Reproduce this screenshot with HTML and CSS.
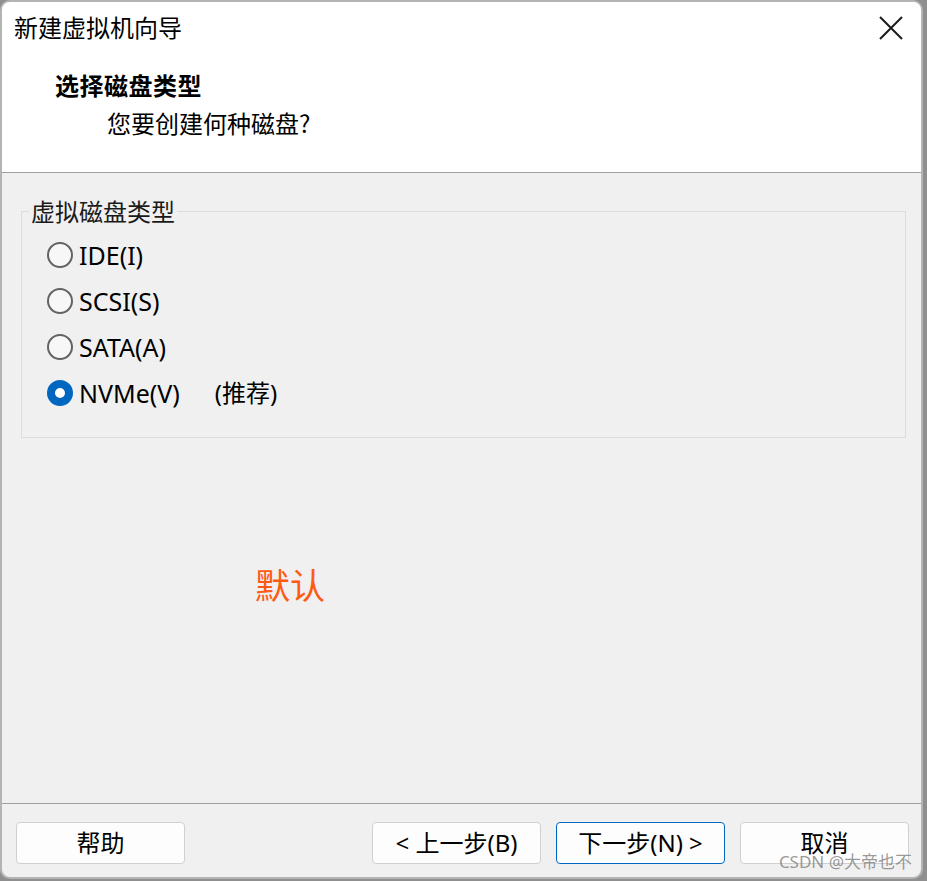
FILE: index.html
```html
<!DOCTYPE html>
<html lang="zh-CN">
<head>
<meta charset="utf-8">
<title>新建虚拟机向导</title>
<link rel="stylesheet" href="styles.css">
</head>
<body>
<div class="window">
  <div class="header">
    <div class="title-row">
      <span class="title">新建虚拟机向导</span>
      <svg class="close" width="24" height="24" viewBox="0 0 24 24"><path d="M1 1 L23 23 M23 1 L1 23" stroke="#1a1a1a" stroke-width="2" fill="none"/></svg>
    </div>
    <div class="heading">选择磁盘类型</div>
    <div class="subheading">您要创建何种磁盘?</div>
  </div>
  <div class="content">
    <fieldset class="group">
      <legend class="legend">虚拟磁盘类型</legend>
      <div class="options">
        <div class="radio-row"><span class="radio"></span><span class="label">IDE(I)</span></div>
        <div class="radio-row"><span class="radio"></span><span class="label">SCSI(S)</span></div>
        <div class="radio-row"><span class="radio"></span><span class="label">SATA(A)</span></div>
        <div class="radio-row"><span class="radio checked"></span><span class="label">NVMe(V)</span><span class="note">(推荐)</span></div>
      </div>
    </fieldset>
    <div class="default-note">默认</div>
  </div>
  <div class="footer">
    <button class="btn">帮助</button>
    <div class="spacer"></div>
    <button class="btn">&lt; 上一步(B)</button>
    <button class="btn primary">下一步(N) &gt;</button>
    <button class="btn">取消</button>
  </div>
  <div class="watermark">CSDN @大帝也不</div>
</div>
</body>
</html>
```

FILE: styles.css
```css
html, body {
  margin: 0;
  padding: 0;
}
body {
  background: #8f8f8f;
  width: 927px;
  height: 881px;
  overflow: hidden;
  font-family: "Noto Sans", "Noto Sans CJK SC", sans-serif;
  color: #000;
}
.window {
  position: relative;
  width: 923px;
  height: 879px;
  box-sizing: border-box;
  border: 2px solid #b4b4b4;
  border-radius: 10px;
  background: #f0f0f0;
  overflow: hidden;
  display: flex;
  flex-direction: column;
}
.header {
  background: #fff;
  height: 171px;
  box-sizing: border-box;
  border-bottom: 1px solid #a0a0a0;
  flex: none;
}
.title-row {
  display: flex;
  justify-content: space-between;
  align-items: center;
  padding: 9px 18px 0 12px;
  height: 32px;
}
.title {
  font-size: 24px;
  line-height: 32px;
  font-family: "Noto Sans CJK SC", sans-serif;
}
.close {
  display: block;
  margin-top: 1px;
}
.heading {
  margin: 26px 0 0 53px;
  font-size: 24px;
  line-height: 32px;
  font-weight: bold;
  letter-spacing: 0.5px;
  font-family: "Noto Sans CJK SC", sans-serif;
}
.subheading {
  margin: 6px 0 0 105px;
  font-size: 24px;
  line-height: 32px;
  font-family: "Noto Sans CJK SC", sans-serif;
}
.content {
  flex: 1;
  display: flex;
  flex-direction: column;
  align-items: flex-start;
}
.group {
  margin: 24px 0 0 19px;
  width: 885px;
  box-sizing: border-box;
  border: 1px solid #dcdcdc;
  padding: 7px 0 21px 7px;
  min-width: 0;
}
.legend {
  padding: 0 2px;
  margin: 0;
  font-size: 24px;
  line-height: 28px;
  font-family: "Noto Sans CJK SC", sans-serif;
  color: #1a1a1a;
}
.options {
  margin-left: 18px;
}
.radio-row {
  display: flex;
  align-items: center;
  height: 46px;
}
.radio {
  width: 26px;
  height: 26px;
  box-sizing: border-box;
  border: 2px solid #636363;
  border-radius: 50%;
  background: #f7f7f7;
  flex: none;
}
.radio.checked {
  border: 8px solid #0067c0;
  background: #fff;
}
.label {
  margin-left: 6px;
  font-size: 25px;
  line-height: 30px;
}
.note {
  margin-left: 35px;
  font-size: 24px;
  line-height: 30px;
}
.default-note {
  margin: 126px 0 0 253px;
  font-size: 35px;
  line-height: 40px;
  color: #ff5a14;
  font-family: "Noto Sans CJK SC", sans-serif;
}
.footer {
  flex: none;
  height: 74px;
  box-sizing: border-box;
  border-top: 1px solid #a0a0a0;
  padding: 18px 12px 0 14px;
  display: flex;
  align-items: flex-start;
  gap: 15px;
}
.spacer {
  flex: 1;
}
.btn {
  width: 169px;
  height: 42px;
  box-sizing: border-box;
  background: #fdfdfd;
  border: 1px solid #d0d0d0;
  border-radius: 4px;
  font-size: 24px;
  font-family: "Noto Sans", "Noto Sans CJK SC", sans-serif;
  color: #000;
  padding: 0;
  line-height: 38px;
}
.btn.primary {
  border: 1px solid #0067c0;
}
.watermark {
  position: absolute;
  right: 9px;
  bottom: 5px;
  font-size: 17px;
  line-height: 20px;
  color: rgba(120, 120, 120, 0.75);
  font-family: "Noto Sans", "Noto Sans CJK SC", sans-serif;
}
```
